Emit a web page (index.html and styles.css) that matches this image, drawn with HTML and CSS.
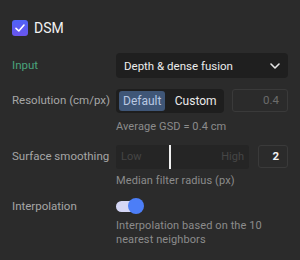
FILE: index.html
```html
<!DOCTYPE html>
<html>
<head>
<meta charset="utf-8">
<link rel="stylesheet" href="styles.css">
</head>
<body>
<div class="panel">
  <div class="header">
    <span class="checkbox">
      <svg width="12" height="12" viewBox="0 0 12 12"><path d="M2 6.3 L4.8 9 L10 3" fill="none" stroke="#fff" stroke-width="1.6" stroke-linecap="round" stroke-linejoin="round"/></svg>
    </span>
    <span class="title">DSM</span>
  </div>
  <div class="form">
    <div class="label label-accent">Input</div>
    <div class="control">
      <div class="select">
        <span>Depth &amp; dense fusion</span>
        <svg width="10" height="6" viewBox="0 0 10 6"><path d="M1 1 L5 5 L9 1" fill="none" stroke="#e6e6e6" stroke-width="1.6" stroke-linecap="round" stroke-linejoin="round"/></svg>
      </div>
    </div>

    <div class="label">Resolution (cm/px)</div>
    <div class="control">
      <div class="inline">
        <div class="segmented">
          <span class="seg active">Default</span>
          <span class="seg">Custom</span>
        </div>
        <div class="numbox disabled">0.4</div>
      </div>
      <div class="help">Average GSD = 0.4 cm</div>
    </div>

    <div class="label">Surface smoothing</div>
    <div class="control">
      <div class="inline">
        <div class="slider">
          <span class="low">Low</span>
          <span class="thumb"></span>
          <span class="high">High</span>
        </div>
        <div class="numbox small">2</div>
      </div>
      <div class="help tight">Median filter radius (px)</div>
    </div>

    <div class="label short">Interpolation</div>
    <div class="control">
      <div class="toggle"><span class="track"></span><span class="knob"></span></div>
      <div class="help toggle-help">Interpolation based on the 10<br>nearest neighbors</div>
    </div>
  </div>
</div>
</body>
</html>
```
FILE: styles.css
```css
html, body {
  margin: 0;
  padding: 0;
  background: #2b2b2b;
}
body {
  width: 300px;
  height: 260px;
  overflow: hidden;
  font-family: Roboto, "Noto Sans", sans-serif;
  color: #e8e8e8;
}
.panel {
  padding: 19px 12px 0 12px;
}
.header {
  display: flex;
  align-items: center;
  gap: 6px;
  height: 17px;
}
.checkbox {
  width: 16px;
  height: 16px;
  border-radius: 3px;
  background: linear-gradient(180deg, #4f63f6 0%, #6a55ee 100%);
  display: flex;
  align-items: center;
  justify-content: center;
}
.title {
  font-size: 14px;
  color: #f2f2f2;
}
.form {
  margin-top: 17px;
  display: grid;
  grid-template-columns: 104px 172px;
  row-gap: 10px;
}
.label {
  font-size: 11.5px;
  color: #a6a6a6;
  height: 25px;
  line-height: 25px;
  white-space: nowrap;
}
.label.short {
  height: 17px;
  line-height: 17px;
}
.label-accent {
  color: #4aa37c;
}
.control {
  display: flex;
  flex-direction: column;
}
.select {
  height: 25px;
  background: #1f1f1f;
  border-radius: 4px;
  display: flex;
  align-items: center;
  justify-content: space-between;
  padding: 0 8px 0 8px;
  font-size: 11.5px;
  color: #ececec;
}
.inline {
  display: flex;
  align-items: center;
  justify-content: space-between;
  height: 25px;
}
.segmented {
  display: flex;
  background: #1e1e1e;
  border-radius: 4px;
  padding: 2px 3px;
  height: 20px;
  width: 102px;
}
.seg {
  font-size: 12px;
  line-height: 20px;
  padding: 0 4px;
  color: #eaeaea;
  border-radius: 3px;
}
.seg + .seg {
  flex: 1;
  text-align: center;
  padding: 0 0 0 5px;
}
.seg.active {
  background: #3f5677;
  color: #b8c8e2;
}
.numbox {
  box-sizing: border-box;
  height: 23px;
  border: 1px solid #3a3a3a;
  border-radius: 3px;
  font-size: 11.5px;
  line-height: 21px;
  text-align: right;
  padding-right: 8px;
}
.numbox.disabled {
  width: 56px;
  color: #6c6c6c;
}
.numbox.small {
  width: 30px;
  color: #f2f2f2;
  font-weight: bold;
}
.help {
  margin-top: 7px;
  font-size: 11px;
  letter-spacing: 0.1px;
  color: #8c8c8c;
  line-height: 14px;
}
.help.tight {
  margin-top: 5px;
}
.help.toggle-help {
  margin-top: 4px;
}
.slider {
  position: relative;
  box-sizing: border-box;
  width: 133px;
  height: 24px;
  background: #252525;
  border-radius: 3px;
  display: flex;
  align-items: center;
  justify-content: space-between;
  padding: 0 5px;
  font-size: 11px;
  color: #464646;
}
.thumb {
  position: absolute;
  left: 53px;
  top: 0;
  width: 2px;
  height: 24px;
  background: #f0f0f0;
}
.toggle {
  position: relative;
  width: 28px;
  height: 17px;
}
.track {
  position: absolute;
  left: 0;
  top: 3px;
  width: 24px;
  height: 11px;
  border-radius: 6px;
  background: #d4d6f5;
}
.knob {
  position: absolute;
  left: 12px;
  top: 0;
  width: 16px;
  height: 16px;
  border-radius: 50%;
  background: #4c7ef7;
}
```
